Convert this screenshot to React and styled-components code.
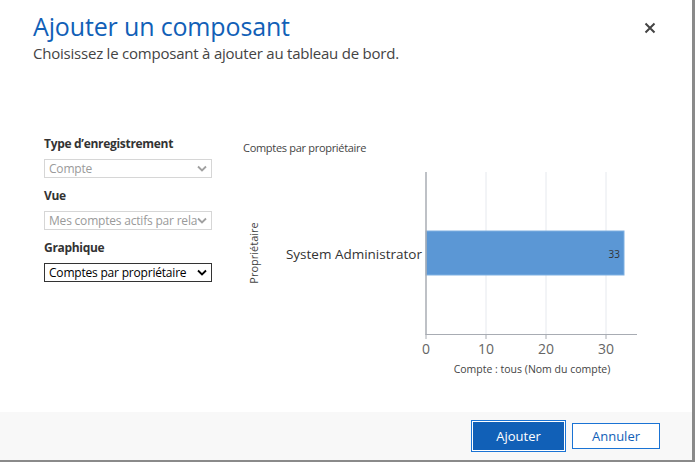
import React from 'react';
import styled, { createGlobalStyle } from 'styled-components';

const GlobalStyle = createGlobalStyle`
  html, body {
    margin: 0;
    padding: 0;
    background: #ffffff;
  }
  body {
    font-family: "Open Sans", "Noto Sans", sans-serif;
  }
`;

const Frame = styled.div`
  width: 695px;
  height: 462px;
  box-sizing: border-box;
  border-right: 3px solid #8a8a8a;
  border-bottom: 2px solid #8a8a8a;
  display: flex;
  flex-direction: column;
  background: #fff;
  overflow: hidden;
`;

const Header = styled.header`
  display: flex;
  justify-content: space-between;
  align-items: flex-start;
  padding: 10px 34px 0 33px;
`;

const Title = styled.h1`
  margin: 0;
  font-family: "Open Sans", sans-serif;
  font-weight: 400;
  font-size: 25px;
  line-height: 32px;
  letter-spacing: -0.15px;
  color: #1160b7;
`;

const Subtitle = styled.p`
  margin: 2px 0 0;
  font-size: 15px;
  line-height: 18px;
  letter-spacing: -0.22px;
  color: #444;
`;

const CloseButton = styled.button`
  margin-top: 12px;
  border: 0;
  background: none;
  padding: 0;
  width: 14px;
  height: 14px;
  cursor: pointer;
  display: flex;
`;

const Body = styled.main`
  flex: 1;
  display: flex;
  padding: 74px 0 0 44px;
`;

const Form = styled.div`
  width: 168px;
  display: flex;
  flex-direction: column;
`;

const Label = styled.label`
  font-size: 12px;
  font-weight: 700;
  color: #333;
  line-height: 16px;
  margin: ${p => (p.$first ? '0' : '10px')} 0 7px;
  letter-spacing: -0.3px;
`;

const SelectBox = styled.div`
  height: 19px;
  box-sizing: border-box;
  border: 1px solid ${p => (p.$disabled ? '#d6d6d6' : '#333')};
  display: flex;
  align-items: center;
  justify-content: space-between;
  padding: 0 4px 0 4px;
  font-size: 12px;
  color: ${p => (p.$disabled ? '#9a9a9a' : '#000')};
  white-space: nowrap;
  overflow: hidden;
`;

const SelectText = styled.span`
  overflow: hidden;
  flex: 1;
  letter-spacing: -0.2px;
`;

const ChartPanel = styled.section`
  margin-left: 31px;
  display: flex;
  flex-direction: column;
`;

const ChartTitle = styled.div`
  font-size: 11px;
  color: #444;
  line-height: 14px;
  margin-top: 5px;
  letter-spacing: -0.3px;
`;

const Footer = styled.footer`
  height: 48px;
  background: #f8f8f8;
  display: flex;
  justify-content: flex-end;
  align-items: center;
  gap: 7px;
  padding-right: 32px;
`;

const Button = styled.button`
  font-family: "Open Sans", sans-serif;
  font-size: 13px;
  box-sizing: border-box;
  cursor: pointer;
  ${p =>
    p.$primary
      ? `
    width: 93px;
    height: 30px;
    background: #1160b7;
    color: #fff;
    border: 1px solid #fff;
    box-shadow: 0 0 0 1px #1a73d4;
  `
      : `
    width: 88px;
    height: 26px;
    background: #fff;
    color: #1160b7;
    border: 1px solid #1a73d4;
  `}
`;

const Chevron = ({ color }) => (
  <svg width="10" height="7" viewBox="0 0 10 7">
    <path d="M1 1.5 L5 5.5 L9 1.5" fill="none" stroke={color} strokeWidth="1.8" />
  </svg>
);

const Select = ({ value, disabled }) => (
  <SelectBox $disabled={disabled}>
    <SelectText>{value}</SelectText>
    <Chevron color={disabled ? '#a0a0a0' : '#000'} />
  </SelectBox>
);

const data = [{ name: 'System Administrator', value: 33 }];

const Chart = () => {
  const x0 = 183;
  const unit = 6;
  const ticks = [0, 10, 20, 30];
  return (
    <svg width="410" height="215" style={{ marginTop: 9, fontFamily: '"Open Sans", sans-serif' }}>
      {ticks.slice(1).map(t => (
        <line key={t} x1={x0 + t * unit} y1="8" x2={x0 + t * unit} y2="170" stroke="#e6e9ee" />
      ))}
      {data.map(d => (
        <g key={d.name}>
          <rect x={x0} y="67" width={d.value * unit} height="44" fill="#5b97d5" stroke="#7fb0e2" />
          <text x={x0 + d.value * unit - 4} y="94" fontSize="10" fill="#333" textAnchor="end">
            {d.value}
          </text>
          <text x={x0 - 4} y="95" fontSize="13.5" fill="#333" textAnchor="end">
            {d.name}
          </text>
        </g>
      ))}
      <line x1={x0} y1="8" x2={x0} y2="171" stroke="#a8acb3" strokeWidth="1.5" />
      <line x1={x0} y1="170.5" x2="394" y2="170.5" stroke="#a8acb3" />
      {ticks.map(t => (
        <g key={t}>
          <line x1={x0 + t * unit} y1="170" x2={x0 + t * unit} y2="175" stroke="#a8acb3" />
          <text x={x0 + t * unit} y="190" fontSize="14" fill="#666" textAnchor="middle">
            {t}
          </text>
        </g>
      ))}
      <text x="289" y="209" fontSize="10.5" fill="#444" textAnchor="middle">
        Compte : tous (Nom du compte)
      </text>
      <text x="0" y="0" fontSize="11" fill="#444" textAnchor="middle" transform="translate(15 89) rotate(-90)">
        Propriétaire
      </text>
    </svg>
  );
};

export default function App() {
  return (
    <>
      <GlobalStyle />
      <Frame>
        <Header>
          <div>
            <Title>Ajouter un composant</Title>
            <Subtitle>Choisissez le composant à ajouter au tableau de bord.</Subtitle>
          </div>
          <CloseButton aria-label="Fermer">
            <svg width="12" height="12" viewBox="0 0 12 12">
              <path d="M1.5 1.5 L10.5 10.5 M10.5 1.5 L1.5 10.5" stroke="#444" strokeWidth="2" />
            </svg>
          </CloseButton>
        </Header>
        <Body>
          <Form>
            <Label $first>Type d’enregistrement</Label>
            <Select value="Compte" disabled />
            <Label>Vue</Label>
            <Select value="Mes comptes actifs par relation" disabled />
            <Label>Graphique</Label>
            <Select value="Comptes par propriétaire" />
          </Form>
          <ChartPanel>
            <ChartTitle>Comptes par propriétaire</ChartTitle>
            <Chart />
          </ChartPanel>
        </Body>
        <Footer>
          <Button $primary>Ajouter</Button>
          <Button>Annuler</Button>
        </Footer>
      </Frame>
    </>
  );
}
